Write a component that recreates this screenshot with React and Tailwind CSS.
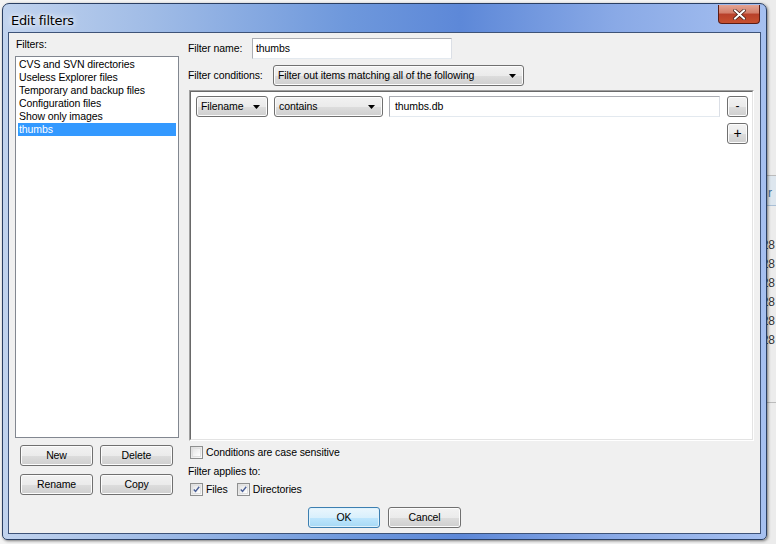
import React from 'react';

const face =
  'rounded-[3px] border border-[#707070] bg-[linear-gradient(#f2f2f2_0%,#ebebeb_50%,#dddddd_51%,#cfcfcf_100%)] shadow-[inset_0_0_0_1px_#fcfcfc] text-black';

function Button({ children, className = '', primary }) {
  return (
    <div
      className={
        primary
          ? 'flex items-center justify-center rounded-[3px] border border-[#3c7fb1] bg-[linear-gradient(#eaf6fd_0%,#d9f0fc_50%,#bee6fd_51%,#a7d9f5_100%)] shadow-[inset_0_0_0_1px_#dff2fc] text-black ' + className
          : 'flex items-center justify-center ' + face + ' ' + className
      }
    >
      {children}
    </div>
  );
}

function Arrow() {
  return (
    <svg width="7" height="4" viewBox="0 0 7 4" className="shrink-0">
      <path d="M0 0h7L3.5 4z" fill="#000" />
    </svg>
  );
}

function Combo({ label, className = '' }) {
  return (
    <div className={'flex items-center justify-between pl-[4px] pr-[7px] shrink-0 ' + face + ' ' + className}>
      <span className="whitespace-nowrap">{label}</span>
      <Arrow />
    </div>
  );
}

function Check({ checked }) {
  return (
    <div className="w-[13px] h-[13px] border border-[#8e8f8f] bg-[linear-gradient(135deg,#dcdcdc,#fbfbfb)] p-[1px] shrink-0">
      <div className="w-full h-full border border-[#e0e0e0] bg-[linear-gradient(135deg,#e6e6e6,#ffffff)] flex items-center justify-center">
        {checked && (
          <svg width="9" height="9" viewBox="0 0 9 9">
            <path d="M1 4.5l2.3 2.6L8 1" fill="none" stroke="#4a5f97" strokeWidth="1.8" />
          </svg>
        )}
      </div>
    </div>
  );
}

const filters = [
  'CVS and SVN directories',
  'Useless Explorer files',
  'Temporary and backup files',
  'Configuration files',
  'Show only images',
  'thumbs',
];

export default function App() {
  return (
    <div className="relative w-[776px] h-[544px] overflow-hidden bg-[#f4f4f4] font-['Liberation_Sans',Arial,sans-serif]">
      {/* desktop behind the dialog */}
      <div className="absolute left-[750px] top-0 w-[26px] h-[544px] bg-[#ececec] flex flex-col text-[12px] text-[#333] leading-[19px]">
        <div className="h-[176px] border-b border-[#bbb]" />
        <div className="h-[30px] bg-[#dde6ee] border-b border-[#a9bfd6] text-[#3d6a99] pt-[8px] text-right pr-[4px]">r</div>
        <div className="pt-[30px] text-right pr-[1px]">
          <div>28</div>
          <div>28</div>
          <div>28</div>
          <div>28</div>
          <div>28</div>
          <div>28</div>
        </div>
        <div className="mt-[52px] border-t border-[#bbb]" />
      </div>

      {/* window */}
      <div className="absolute left-[2px] top-[3px] w-[765px] h-[537px] rounded-t-[7px] rounded-b-[5px] border border-[#2a3f63] bg-[linear-gradient(90deg,#c1d3ee_0%,#9fbbe6_20%,#6e98dc_45%,#5d88d8_60%,#89a9e6_80%,#a6c0f0_100%)] shadow-[1px_1px_3px_rgba(0,0,0,0.5)] flex flex-col px-[5px] pb-[5px]">
        <div className="h-[28px] flex items-start justify-between shrink-0">
          <div className="pt-[7px] pl-[3px] text-[13px] text-black font-['DejaVu_Sans',sans-serif] tracking-[-0.3px] [text-shadow:0_0_8px_#fff,0_0_4px_#fff]">
            Edit filters
          </div>
          <div className="mt-[1px] mr-[1px] w-[42px] h-[19px] rounded-b-[4px] border border-t-0 border-[#5a1c15] bg-[linear-gradient(#e5a493_0%,#d27e6a_45%,#b8402a_50%,#c7502f_100%)] flex items-center justify-center">
            <svg width="13" height="11" viewBox="0 0 13 11">
              <path d="M2 1.5l9 8M11 1.5l-9 8" stroke="#3b1710" strokeWidth="3.4" strokeLinecap="square" />
              <path d="M2 1.5l9 8M11 1.5l-9 8" stroke="#fff" strokeWidth="2" strokeLinecap="square" />
            </svg>
          </div>
        </div>

        {/* client area */}
        <div className="flex-1 border border-[#3e5378] bg-[#f0f0f0] flex text-[10.5px] tracking-[-0.1px] text-black leading-[13px] whitespace-nowrap">
          {/* left column */}
          <div className="w-[172px] pl-[6px] pt-[5px] flex flex-col shrink-0">
            <div className="h-[13px] pl-px">Filters:</div>
            <div className="mt-[5px] h-[382px] w-[164px] border border-[#828790] bg-white p-[2px] pt-[1px]">
              {filters.map((f, i) => (
                <div
                  key={f}
                  className={
                    'h-[13px] pl-[1px] ' +
                    (i === filters.length - 1 ? 'bg-[#3399ff] text-white' : '')
                  }
                >
                  {f}
                </div>
              ))}
            </div>
            <div className="mt-[7px] grid grid-cols-[73px_73px] gap-x-[7px] gap-y-[8px] pl-[5px]">
              <Button className="h-[21px]">New</Button>
              <Button className="h-[21px]">Delete</Button>
              <Button className="h-[21px]">Rename</Button>
              <Button className="h-[21px]">Copy</Button>
            </div>
          </div>

          {/* right column */}
          <div className="flex-1 pl-[7px] pr-[7px] pt-[5px] flex flex-col">
            <div className="flex items-center h-[21px]">
              <span className="w-[64px] shrink-0">Filter name:</span>
              <div className="w-[200px] h-[21px] border border-[#abadb3] border-b-[#e3e9ef] border-r-[#dbdfe6] bg-white px-[3px] flex items-center">
                thumbs
              </div>
            </div>
            <div className="flex items-center h-[21px] mt-[6px]">
              <span className="w-[85px] shrink-0">Filter conditions:</span>
              <Combo label="Filter out items matching all of the following" className="w-[251px] h-[21px]" />
            </div>

            {/* conditions panel */}
            <div className="mt-[4px] ml-[1px] w-[565px] h-[351px] border border-[#a0a0a0] border-b-[#ffffff] border-r-[#ffffff] bg-white">
              <div className="w-full h-full border border-[#696969] border-b-[#e3e3e3] border-r-[#e3e3e3] pl-[5px] pt-[4px] flex flex-col">
                <div className="flex items-center gap-[6px] h-[21px]">
                  <Combo label="Filename" className="w-[72px] h-[21px]" />
                  <Combo label="contains" className="w-[109px] h-[21px]" />
                  <div className="w-[331px] h-[21px] border border-[#abadb3] border-b-[#e3e9ef] border-r-[#dbdfe6] bg-white px-[5px] flex items-center">
                    thumbs.db
                  </div>
                  <Button className="w-[21px] h-[21px] ml-px text-[12px]">-</Button>
                </div>
                <div className="flex justify-end pr-[4px] mt-[6px]">
                  <Button className="w-[21px] h-[21px] text-[14px]">+</Button>
                </div>
              </div>
            </div>

            <div className="flex items-center gap-[3px] mt-[5px] ml-[2px] h-[13px]">
              <Check />
              <span>Conditions are case sensitive</span>
            </div>
            <div className="mt-[6px] h-[13px]">Filter applies to:</div>
            <div className="flex items-center mt-[5px] ml-[2px] h-[13px]">
              <Check checked />
              <span className="ml-[3px]">Files</span>
              <span className="ml-[9px]" />
              <Check checked />
              <span className="ml-[3px]">Directories</span>
            </div>
            <div className="flex gap-[8px] mt-[11px] ml-[120px]">
              <Button primary className="w-[72px] h-[21px]">OK</Button>
              <Button className="w-[73px] h-[21px]">Cancel</Button>
            </div>
          </div>
        </div>
      </div>
    </div>
  );
}
